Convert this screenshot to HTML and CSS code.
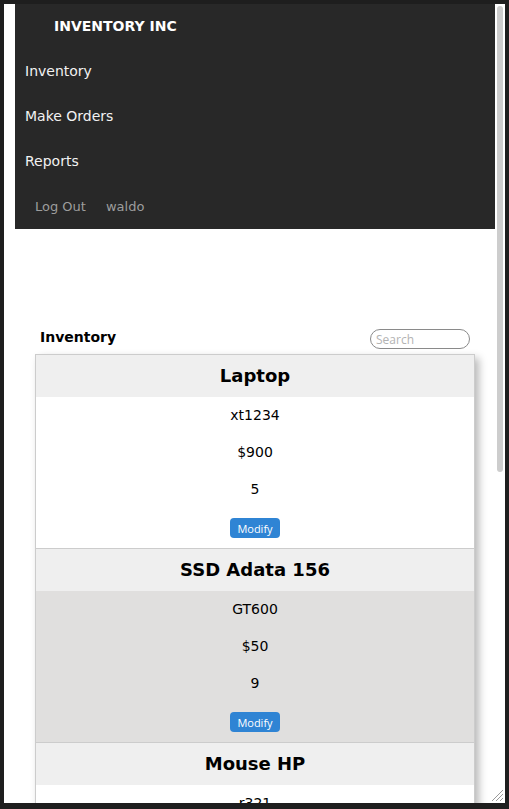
FILE: index.html
```html
<!DOCTYPE html>
<html>
<head>
<meta charset="utf-8">
<title>Inventory Inc</title>
<link rel="stylesheet" href="styles.css">
</head>
<body>
<div class="window">
  <div class="page">
    <nav class="navbar">
      <div class="brand">INVENTORY INC</div>
      <a class="nav-link" href="#">Inventory</a>
      <a class="nav-link" href="#">Make Orders</a>
      <a class="nav-link" href="#">Reports</a>
      <div class="nav-user">
        <a class="muted" href="#">Log Out</a>
        <span class="muted">waldo</span>
      </div>
    </nav>
    <main class="main">
      <div class="toolbar">
        <h2 class="title">Inventory</h2>
        <input class="search" type="text" placeholder="Search">
      </div>
      <div class="card">
        <div class="item">
          <div class="item-head">Laptop</div>
          <div class="item-body">
            <div class="row">xt1234</div>
            <div class="row">$900</div>
            <div class="row">5</div>
            <button class="btn">Modify</button>
          </div>
        </div>
        <div class="item alt">
          <div class="item-head">SSD Adata 156</div>
          <div class="item-body">
            <div class="row">GT600</div>
            <div class="row">$50</div>
            <div class="row">9</div>
            <button class="btn">Modify</button>
          </div>
        </div>
        <div class="item">
          <div class="item-head">Mouse HP</div>
          <div class="item-body">
            <div class="row">r321</div>
          </div>
        </div>
      </div>
    </main>
  </div>
  <div class="scroll-thumb"></div>
  <svg class="grip" width="14" height="14" viewBox="0 0 14 14">
    <path d="M13 2 L2 13 M13 6 L6 13 M13 10 L10 13" stroke="#9a9a9a" stroke-width="1" fill="none"/>
  </svg>
</div>
</body>
</html>
```
FILE: styles.css
```css
* { box-sizing: border-box; }
html, body { margin: 0; padding: 0; }
body {
  background: #1e1e1e;
  font-family: "DejaVu Sans", Verdana, sans-serif;
  width: 509px;
  height: 809px;
  overflow: hidden;
}
.window {
  position: relative;
  margin: 4px 4px 0 4px;
  width: 501px;
  height: 799px;
  background: #ffffff;
  overflow: hidden;
}
.page {
  padding: 0 10px 0 11px;
}
.navbar {
  background: #282828;
  display: flex;
  flex-direction: column;
}
.brand {
  height: 45px;
  display: flex;
  align-items: center;
  padding-left: 39px;
  padding-bottom: 2px;
  color: #ffffff;
  font-weight: bold;
  font-size: 14px;
}
.nav-link {
  height: 45px;
  display: flex;
  align-items: center;
  padding-left: 10px;
  padding-bottom: 2px;
  color: #f2f2f2;
  font-size: 14px;
  text-decoration: none;
}
.nav-user {
  height: 45px;
  display: flex;
  align-items: center;
  gap: 20px;
  padding-left: 20px;
}
.muted {
  color: #9d9d9d;
  font-size: 13px;
  text-decoration: none;
}
.main {
  padding: 100px 20px 0 20px;
}
.toolbar {
  display: flex;
  justify-content: space-between;
  align-items: flex-start;
  height: 20px;
  margin-bottom: 5px;
  padding: 0 5px;
}
.title {
  margin: 0;
  font-size: 14px;
  line-height: 17px;
  font-weight: bold;
  color: #000;
}
.search {
  width: 100px;
  height: 20px;
  border: 1px solid #8a8a8a;
  border-radius: 10px;
  padding: 0 5px;
  font-family: "Open Sans", sans-serif;
  font-size: 12px;
  outline: none;
}
.search::placeholder { color: #b3b3b3; }
.card {
  width: 440px;
  border: 1px solid #cccccc;
  border-top: none;
  box-shadow: 4px 4px 8px rgba(0, 0, 0, 0.28);
}
.item {
  border-top: 1px solid #cccccc;
}
.item-head {
  height: 42px;
  padding-bottom: 2px;
  background: #efefef;
  display: flex;
  align-items: center;
  justify-content: center;
  font-size: 18px;
  font-weight: bold;
  color: #000;
}
.item-body {
  display: flex;
  flex-direction: column;
  align-items: center;
  background: #ffffff;
  padding-bottom: 10px;
}
.item.alt .item-body { background: #e0dfde; }
.row {
  height: 37px;
  line-height: 37px;
  font-size: 14px;
  color: #000;
}
.btn {
  margin-top: 10px;
  height: 20px;
  padding: 0 7px;
  border: none;
  border-radius: 4px;
  background: #2f84d4;
  color: #ffffff;
  font-family: "Open Sans", sans-serif;
  font-size: 11px;
}
.scroll-thumb {
  position: absolute;
  right: 2px;
  top: 2px;
  width: 6px;
  height: 466px;
  border-radius: 3px;
  background: #cdcdcd;
}
.grip {
  position: absolute;
  right: 1px;
  bottom: 1px;
}
```
